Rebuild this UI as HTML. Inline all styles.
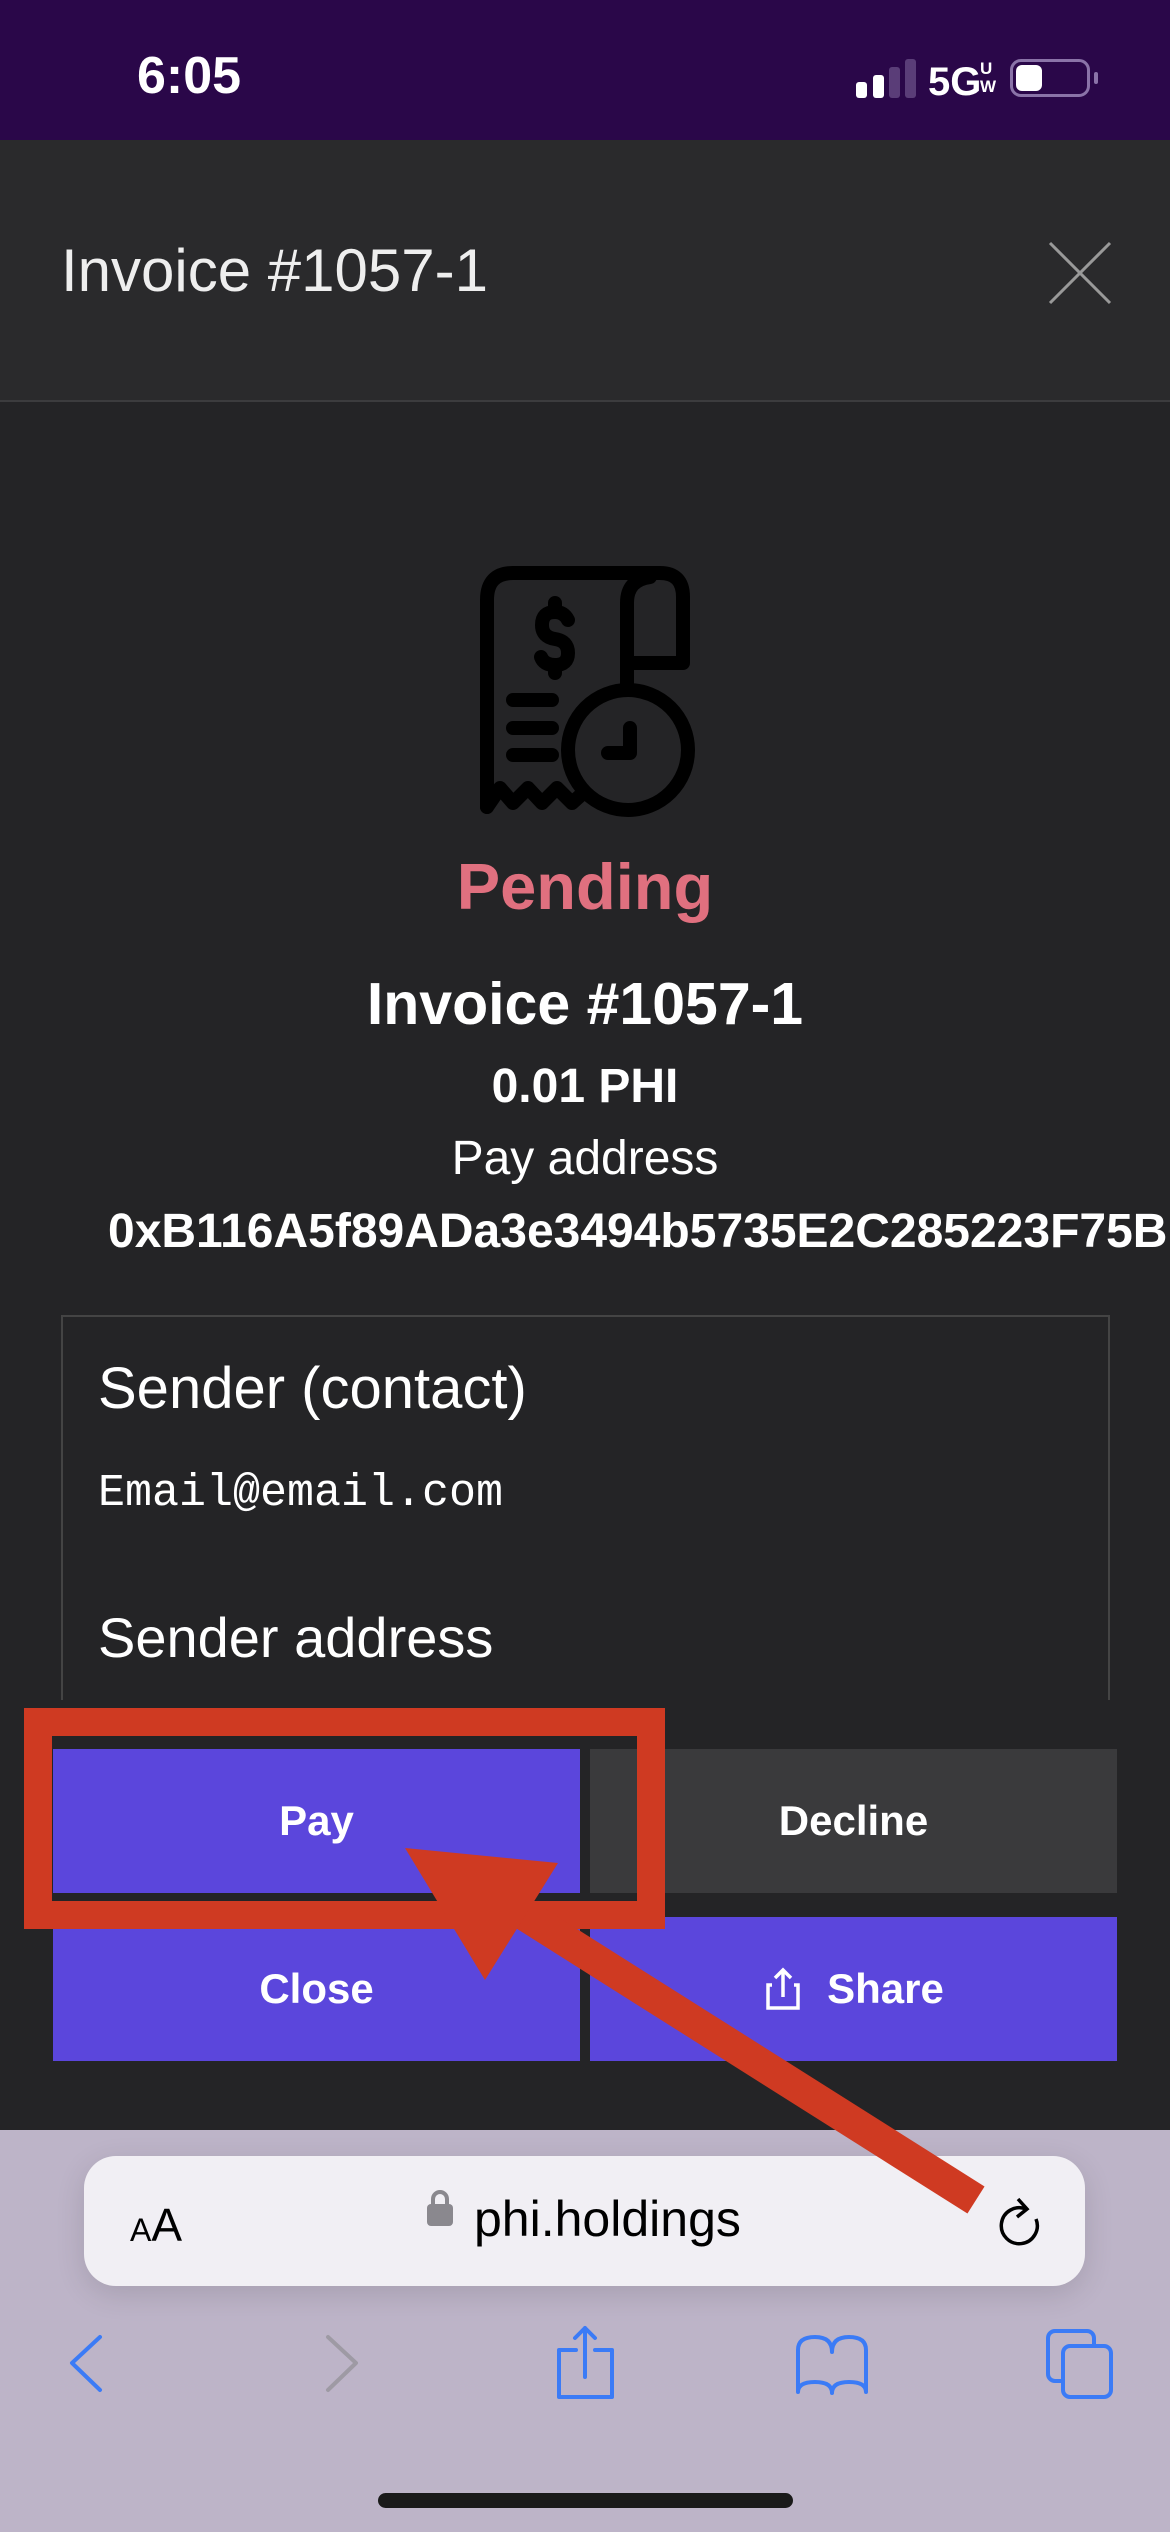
<!DOCTYPE html>
<html><head><meta charset="utf-8"><style>
*{margin:0;padding:0;box-sizing:border-box}
body{width:1170px;height:2532px;position:relative;overflow:hidden;background:#242426;font-family:"Liberation Sans",sans-serif;color:#fff}
.a{position:absolute}
.c{position:absolute;left:0;width:1170px;text-align:center;white-space:nowrap}
.btn{position:absolute;display:flex;align-items:center;justify-content:center;font-size:42px;font-weight:bold;color:#fff}
</style></head><body>
<div class="a" style="left:0;top:0;width:1170px;height:140px;background:#2a0749"></div>
<div class="a" style="left:137px;top:46px;font-size:52px;font-weight:bold">6:05</div>
<div class="a" style="left:856px;top:82px;width:11px;height:16px;background:#fff;border-radius:3px"></div>
<div class="a" style="left:873px;top:75px;width:11px;height:23px;background:#fff;border-radius:3px"></div>
<div class="a" style="left:889px;top:67px;width:11px;height:31px;background:#5a3d78;border-radius:3px"></div>
<div class="a" style="left:905px;top:59px;width:11px;height:39px;background:#5a3d78;border-radius:3px"></div>
<div class="a" style="left:928px;top:60px;font-size:40px;font-weight:bold">5G</div>
<div class="a" style="left:980px;top:60px;font-size:17px;font-weight:bold;line-height:18px">U<br>W</div>
<div class="a" style="left:1010px;top:59px;width:80px;height:38px;border:3px solid #8a73a8;border-radius:11px"></div>
<div class="a" style="left:1016px;top:65px;width:26px;height:26px;background:#fff;border-radius:6px"></div>
<div class="a" style="left:1094px;top:72px;width:4px;height:12px;background:#8a73a8;border-radius:2px"></div>

<div class="a" style="left:0;top:140px;width:1170px;height:262px;background:#2a2a2c;border-bottom:2px solid #3c3c3e"></div>
<div class="a" style="left:61px;top:236px;font-size:60px;color:#eee">Invoice #1057-1</div>
<svg class="a" style="left:1048px;top:241px" width="64" height="64" viewBox="0 0 64 64"><path d="M2 2L62 62M62 2L2 62" stroke="#999" stroke-width="3"/></svg>

<svg class="a" style="left:440px;top:540px" width="300" height="300" viewBox="0 0 300 300" fill="none" stroke="#000" stroke-width="14" stroke-linecap="round" stroke-linejoin="round">
<path d="M47 267V60Q47 33 73 33H220Q243 33 243 57V123H193"/>
<path d="M187 150V63Q187 40 210 37"/>
<path d="M47 267L60 248L73 263L88 248L102 263L117 248L132 263L142 254"/>
<circle cx="188" cy="210" r="60"/>
<path d="M190 188V213H168"/>
<path d="M73 160H112M73 188H112M73 215H112"/>
<path d="M115 63V72M115 125V133"/>
<path d="M128 80Q124 72 115 72Q102 72 102 85Q102 97 115 99Q128 101 128 113Q128 125 115 125Q104 125 101 117"/>
</svg>

<div class="c" style="top:849px;font-size:65px;font-weight:bold;color:#e0707f">Pending</div>
<div class="c" style="top:970px;font-size:59px;font-weight:bold">Invoice #1057-1</div>
<div class="c" style="top:1059px;font-size:48px;font-weight:bold">0.01 PHI</div>
<div class="c" style="top:1131px;font-size:48px">Pay address</div>
<div class="a" style="left:108px;top:1204px;font-size:48px;font-weight:bold;white-space:nowrap">0xB116A5f89ADa3e3494b5735E2C285223F75B</div>

<div class="a" style="left:61px;top:1315px;width:1049px;height:400px;border:2px solid #444;border-bottom:none"></div>
<div class="a" style="left:98px;top:1355px;font-size:58px">Sender (contact)</div>
<div class="a" style="left:98px;top:1468px;font-size:45px;font-family:'Liberation Mono',monospace">Email@email.com</div>
<div class="a" style="left:98px;top:1605px;font-size:56px">Sender address</div>
<div class="a" style="left:0;top:1700px;width:1170px;height:430px;background:#242426"></div>

<div class="btn" style="left:53px;top:1749px;width:527px;height:144px;background:#5b46dc">Pay</div>
<div class="btn" style="left:590px;top:1749px;width:527px;height:144px;background:#3a3a3c">Decline</div>
<div class="btn" style="left:53px;top:1917px;width:527px;height:144px;background:#5b46dc">Close</div>
<div class="btn" style="left:590px;top:1917px;width:527px;height:144px;background:#5b46dc"><svg width="40" height="44" viewBox="0 0 40 44" fill="none" stroke="#fff" stroke-width="3.5" style="margin-right:24px"><path d="M20 30V3M12 11L20 3L28 11M9 18H5V41H35V18H31"/></svg>Share</div>

<div class="a" style="left:24px;top:1708px;width:641px;height:221px;border:28px solid #cf3a22"></div>

<div class="a" style="left:0;top:2130px;width:1170px;height:402px;background:#bdb4c8"></div>
<div class="a" style="left:84px;top:2156px;width:1001px;height:130px;background:#f1eff4;border-radius:32px;box-shadow:0 8px 30px rgba(0,0,0,0.12)"></div>
<div class="a" style="left:130px;top:2198px;font-size:46px;color:#000"><span style="font-size:32px">A</span>A</div>
<div class="a" style="left:427px;top:2204px;width:26px;height:22px;background:#8a888e;border-radius:4px"></div>
<div class="a" style="left:431px;top:2190px;width:18px;height:22px;border:4px solid #8a888e;border-radius:9px 9px 0 0"></div>
<div class="a" style="left:474px;top:2190px;font-size:50px;color:#000">phi.holdings</div>
<svg class="a" style="left:996px;top:2195px" width="50" height="58" viewBox="0 0 50 58" fill="none" stroke="#000" stroke-width="3.5"><path d="M30 14A18 18 0 1 0 40 24"/><path d="M22 4L31 14L21 22"/></svg>

<svg class="a" style="left:0;top:0" width="1170" height="2532" fill="none" stroke-width="4" stroke-linecap="round" stroke-linejoin="round">
<path d="M100 2337L72 2363L100 2390" stroke="#3b7bf6"/>
<path d="M328 2337L356 2363L328 2390" stroke="#9e9aa4"/>
<g stroke="#3b7bf6">
<path d="M576 2350H559V2397H612V2350H595M585 2377V2328M575 2338L585 2328L595 2338"/>
<path d="M798 2392V2350Q798 2337 815 2337Q832 2337 832 2352Q832 2337 849 2337Q866 2337 866 2350V2392Q866 2382 849 2382Q832 2382 832 2393Q832 2382 815 2382Q798 2382 798 2392Z"/>
<rect x="1048" y="2331" width="46" height="50" rx="7"/>
<rect x="1063" y="2346" width="48" height="51" rx="7" fill="#bdb4c8"/>
</g></svg>
<div class="a" style="left:378px;top:2493px;width:415px;height:15px;background:#1a1a1a;border-radius:8px"></div>

<svg class="a" style="left:0;top:0" width="1170" height="2532"><line x1="525" y1="1915" x2="976" y2="2200" stroke="#cf3a22" stroke-width="32"/><polygon points="405,1848 558,1863 485,1980" fill="#cf3a22"/></svg>
</body></html>
